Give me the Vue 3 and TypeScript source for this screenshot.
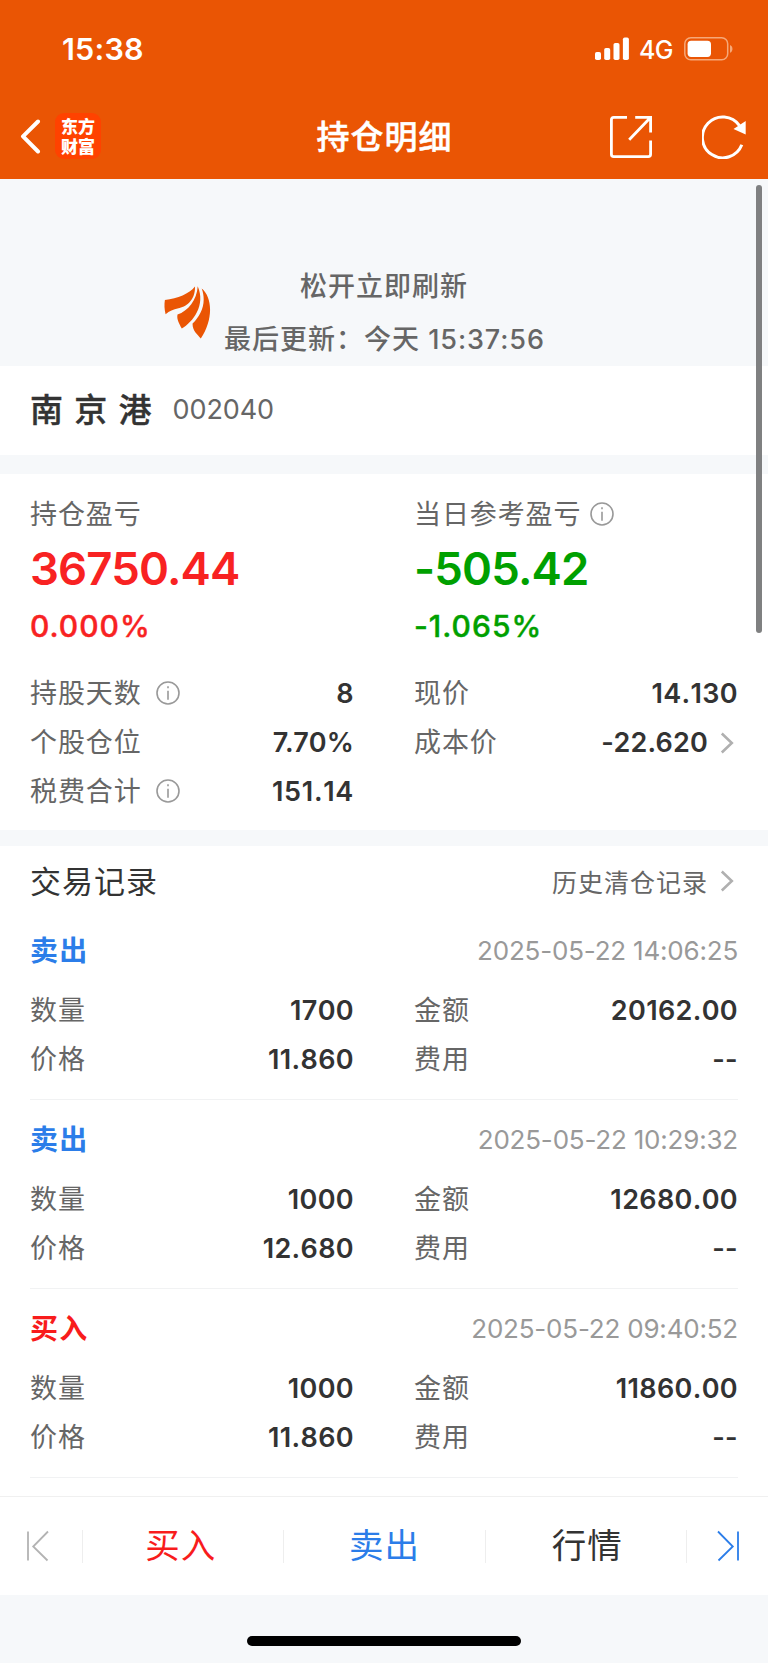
<script setup lang="ts">
interface TradeRecord {
  side: 'buy' | 'sell'
  label: string
  time: string
  quantity: string
  amount: string
  price: string
  fee: string
}

const records: TradeRecord[] = [
  { side: 'sell', label: '卖出', time: '2025-05-22 14:06:25', quantity: '1700', amount: '20162.00', price: '11.860', fee: '--' },
  { side: 'sell', label: '卖出', time: '2025-05-22 10:29:32', quantity: '1000', amount: '12680.00', price: '12.680', fee: '--' },
  { side: 'buy', label: '买入', time: '2025-05-22 09:40:52', quantity: '1000', amount: '11860.00', price: '11.860', fee: '--' },
]
</script>

<template>
  <div class="screen">
    <header class="top">
      <div class="status">
        <span class="clock">15:38</span>
        <div class="signals">
          <svg class="bars" width="35" height="24" viewBox="0 0 35 24" fill="#fff">
            <rect x="0" y="15" width="6" height="8" rx="1.8" />
            <rect x="9.2" y="11" width="6" height="12" rx="1.8" />
            <rect x="18.5" y="6" width="6" height="17" rx="1.8" />
            <rect x="27.9" y="0.5" width="6" height="22.5" rx="1.8" />
          </svg>
          <span class="network">4G</span>
          <svg class="battery" width="50" height="24" viewBox="0 0 50 24">
            <rect x="0.8" y="0.8" width="42.9" height="22" rx="6" fill="none" stroke="#f6a878" stroke-width="1.5" />
            <rect x="3.6" y="3.7" width="23.4" height="16.2" rx="3.6" fill="#fff" />
            <path d="M46 8c3.3 1.2 3.3 6.6 0 7.8z" fill="#f6a878" />
          </svg>
        </div>
      </div>
      <div class="nav">
        <svg class="back" width="22" height="36" viewBox="0 0 22 36" fill="none" stroke="#fff" stroke-width="4" stroke-linecap="round" stroke-linejoin="round">
          <path d="M18 2.5 3 17.3 18 32.5" />
        </svg>
        <div class="brand"><span class="brand-name">东方财富</span></div>
        <h1 class="title">持仓明细</h1>
        <svg class="share" width="44" height="44" viewBox="0 0 44 44" fill="none" stroke="#fff" stroke-width="2.8">
          <path d="M18 2.4H4.8Q2.4 2.4 2.4 4.8v34.4q0 2.4 2.4 2.4h34.4q2.4 0 2.4-2.4V25.5" />
          <path d="M26.2 2.4h15.4V17.6M41 3 20.2 24.8" />
        </svg>
        <svg class="reload" width="46" height="44" viewBox="0 0 46 44">
          <path d="M39.8 29.8A20.4 20.4 0 1 1 37.5 10.7" fill="none" stroke="#fff" stroke-width="3" />
          <path d="M43.7 6v13.4L31.5 14z" fill="#fff" />
        </svg>
      </div>
    </header>

    <section class="refresh">
      <svg class="logo" width="47" height="53" viewBox="0 0 47 53" fill="#ea5504">
        <path d="M.9 14C14 12 25 8 31 .4 31.5 15 21 21 14.5 22.2 9 23.2 5.5 25 1.6 28.2.3 23 .2 18 .9 14z" />
        <path d="M33.7.2C42 19 29 36 17.8 42.5 15 37.5 12.5 33 13.5 28.5 24 25 33 14 33.7.2z" />
        <path d="M37.7 2.6C49 12 49 34 36.8 52.6 33 48 28.2 44.5 28.6 37.5 37 29 43 17 37.7 2.6z" />
      </svg>
      <div class="refresh-text">
        <p class="release">松开立即刷新</p>
        <p class="updated">最后更新：<span class="today">今天 <span class="num">15:37:56</span></span></p>
      </div>
    </section>

    <section class="stock">
      <span class="stock-name">南京港</span>
      <span class="stock-code">002040</span>
    </section>

    <section class="summary">
      <div class="columns">
        <div class="profit up">
          <div class="label">持仓盈亏</div>
          <div class="big">36750.44</div>
          <div class="percent">0.000%</div>
        </div>
        <div class="profit down">
          <div class="label">当日参考盈亏
            <svg class="info near" viewBox="0 0 24 24"><circle cx="12" cy="12" r="11" /><path d="M12 9.7v9.1M12 5.2v2" /></svg>
          </div>
          <div class="big">-505.42</div>
          <div class="percent">-1.065%</div>
        </div>
      </div>
      <div class="columns facts">
        <div class="row">
          <span class="label">持股天数<svg class="info" viewBox="0 0 24 24"><circle cx="12" cy="12" r="11" /><path d="M12 9.7v9.1M12 5.2v2" /></svg></span>
          <b>8</b>
        </div>
        <div class="row"><span class="label">现价</span><b>14.130</b></div>
        <div class="row"><span class="label">个股仓位</span><b class="kerned">7.70%</b></div>
        <div class="row">
          <span class="label">成本价</span>
          <span class="linked"><b class="kerned">-22.620</b><svg class="chevron" viewBox="0 0 14 22"><path d="M1.8 1.5 11.8 11 1.8 20.5" /></svg></span>
        </div>
        <div class="row">
          <span class="label">税费合计<svg class="info" viewBox="0 0 24 24"><circle cx="12" cy="12" r="11" /><path d="M12 9.7v9.1M12 5.2v2" /></svg></span>
          <b class="wide">151.14</b>
        </div>
      </div>
    </section>

    <section class="trades">
      <div class="trades-head">
        <h2>交易记录</h2>
        <span class="history">历史清仓记录<svg class="chevron" viewBox="0 0 14 22"><path d="M1.8 1.5 11.8 11 1.8 20.5" /></svg></span>
      </div>
      <article v-for="record in records" :key="record.time" class="record">
        <div class="record-head">
          <span class="side" :class="record.side">{{ record.label }}</span>
          <time>{{ record.time }}</time>
        </div>
        <div class="columns">
          <div class="row"><span class="label">数量</span><b>{{ record.quantity }}</b></div>
          <div class="row"><span class="label">金额</span><b>{{ record.amount }}</b></div>
          <div class="row"><span class="label">价格</span><b>{{ record.price }}</b></div>
          <div class="row"><span class="label">费用</span><b>{{ record.fee }}</b></div>
        </div>
      </article>
    </section>

    <footer class="actions">
      <div class="edge">
        <svg width="24" height="32" viewBox="0 0 24 32" fill="none" stroke="#b3b3b3" stroke-width="1.8"><path d="M2 1.5v29M22 1.5 7.2 16.5 21.5 30.5" /></svg>
      </div>
      <div class="action buy">买入</div>
      <div class="action sell">卖出</div>
      <div class="action quote">行情</div>
      <div class="edge last">
        <svg width="24" height="32" viewBox="0 0 24 32" fill="none" stroke="#2b7de9" stroke-width="1.8"><path d="M22 1.5v29M2 1.5 16.8 16.5 2.5 30.5" /></svg>
      </div>
    </footer>
    <div class="home"><div class="home-bar"></div></div>
    <div class="scrollbar"></div>
  </div>
</template>

<style>
body {
  margin: 0;
  background: #f6f8fa;
}
</style>

<style scoped>
.screen {
  position: relative;
  width: 768px;
  height: 1663px;
  overflow: hidden;
  display: flex;
  flex-direction: column;
  background: #f6f8fa;
  color: #333;
  font-family: Inter, "Noto Sans CJK SC", sans-serif;
  white-space: nowrap;
}
.top {
  height: 179px;
  flex: none;
  background: #ea5504;
  color: #fff;
}
.status {
  height: 98px;
  display: flex;
  justify-content: space-between;
  padding: 0 34px 0 62px;
  align-items: center;
}
.clock {
  font-size: 30.5px;
  font-weight: 600;
  letter-spacing: 0.2px;
  padding-bottom: 2px;
}
.signals {
  display: flex;
  align-items: center;
}
.network {
  font-size: 25px;
  font-weight: 500;
  letter-spacing: -0.5px;
  margin: 2px 11px 0 9px;
}
.nav {
  height: 81px;
  display: flex;
  align-items: center;
  padding: 0 20px 4px 20px;
  box-sizing: border-box;
}
.back {
  flex: none;
}
.brand {
  width: 46px;
  height: 46px;
  flex: none;
  margin: 0 0 1px 13px;
  border-radius: 9px;
  background: #ff4200;
  display: flex;
  align-items: center;
  justify-content: center;
}
.brand-name {
  width: 36px;
  text-align: center;
  white-space: normal;
  font: 900 17px/20px "Noto Sans CJK SC", sans-serif;
}
.title {
  flex: 1;
  margin: 0 -5px 3px 0;
  padding-left: 54px;
  text-align: center;
  font-size: 33px;
  font-weight: 500;
  letter-spacing: 1px;
  -webkit-text-stroke: 0.5px currentColor;
}
.share {
  flex: none;
  margin-right: 49px;
}
.reload {
  flex: none;
}
.refresh {
  height: 187px;
  flex: none;
  display: flex;
  align-items: flex-start;
  padding-left: 164px;
  box-sizing: border-box;
  color: #666;
  font-size: 27px;
  font-weight: 500;
}
.logo {
  margin-top: 107px;
  flex: none;
}
.refresh-text {
  width: 320px;
  margin: 81px 0 0 13px;
}
.release,
.updated {
  margin: 0;
  line-height: 53px;
  letter-spacing: 1px;
}
.release {
  text-align: center;
}
.num {
  letter-spacing: 0.9px;
}
.stock {
  height: 89px;
  flex: none;
  box-sizing: border-box;
  padding: 0 30px 2px;
  background: #fff;
  display: flex;
  align-items: center;
}
.stock-name {
  margin: 0 0 4px 0;
  font-size: 33px;
  font-weight: 500;
  letter-spacing: 11.2px;
  -webkit-text-stroke: 0.4px currentColor;
}
.stock-code {
  margin-left: 10px;
  font-size: 27px;
  letter-spacing: -0.1px;
  color: #666;
}
.summary {
  height: 356px;
  flex: none;
  margin-top: 19px;
  padding: 16px 30px 0;
  box-sizing: border-box;
  background: #fff;
}
.columns {
  display: grid;
  grid-template-columns: 324px 324px;
  column-gap: 60px;
}
.label {
  font-size: 27px;
  line-height: 49px;
  letter-spacing: 0.9px;
  color: #666;
  display: flex;
  align-items: center;
}
.big {
  font-size: 45.5px;
  font-weight: 600;
  line-height: 60px;
  letter-spacing: -0.85px;
}
.percent {
  font-size: 30px;
  font-weight: 500;
  line-height: 54px;
  letter-spacing: 1px;
  -webkit-text-stroke: 0.4px currentColor;
}
.up {
  color: #f82222;
}
.down {
  color: #00a000;
}
.info {
  width: 24px;
  height: 24px;
  margin: 0 0 1px 14px;
  fill: none;
  stroke: #999;
  stroke-width: 1.6;
}
.info.near {
  margin-left: 9px;
}
.facts {
  margin-top: 16px;
}
.row {
  height: 49px;
  display: flex;
  align-items: center;
  justify-content: space-between;
}
.row b {
  font-size: 27px;
  font-weight: 600;
  font-kerning: none;
  letter-spacing: 0.35px;
}
.row b.kerned {
  font-kerning: normal;
  letter-spacing: 0.2px;
}
.row b.wide {
  letter-spacing: 0.7px;
}
.linked {
  display: flex;
  align-items: center;
}
.chevron {
  width: 14px;
  height: 22px;
  margin: 0 4px 0 12px;
  fill: none;
  stroke: #b0b0b0;
  stroke-width: 2.6;
}
.trades {
  flex: none;
  height: 650px;
  margin-top: 16px;
  padding: 0 30px;
  box-sizing: border-box;
  background: #fff;
}
.trades-head {
  height: 65px;
  padding-top: 7px;
  box-sizing: border-box;
  display: flex;
  align-items: center;
  justify-content: space-between;
}
.trades-head h2 {
  margin: 0;
  font-size: 31px;
  line-height: 44px;
  font-weight: 400;
  letter-spacing: 1px;
}
.history {
  display: flex;
  align-items: center;
  font-size: 25px;
  letter-spacing: 1px;
  color: #666;
  padding-bottom: 2px;
}
.record {
  height: 189px;
  padding-top: 5px;
  box-sizing: border-box;
  border-bottom: 1px solid #f1f2f3;
}
.record-head {
  height: 70px;
  padding-bottom: 1px;
  box-sizing: border-box;
  display: flex;
  align-items: center;
  justify-content: space-between;
}
.side {
  font-size: 28px;
  font-weight: 700;
  letter-spacing: 1.2px;
  padding-bottom: 3px;
}
.buy {
  color: #f81c1c;
}
.sell {
  color: #2b7de9;
}
.record time {
  font-size: 26px;
  letter-spacing: -0.2px;
  color: #999;
}
.actions {
  height: 99px;
  flex: none;
  box-sizing: border-box;
  border-top: 1px solid #f0f0f0;
  background: #fff;
  display: flex;
  align-items: center;
}
.edge {
  width: 83px;
  height: 33px;
  display: flex;
  align-items: center;
  justify-content: center;
  padding-right: 6px;
  box-sizing: border-box;
  border-right: 1px solid #eee;
}
.edge.last {
  width: 81px;
  padding: 0 0 0 2px;
  border: 0;
}
.action {
  flex: 1;
  height: 33px;
  line-height: 32px;
  text-align: center;
  font-size: 34.5px;
  letter-spacing: 1px;
  border-right: 1px solid #eee;
}
.action.buy {
  text-indent: -5px;
}
.action.quote {
  text-indent: 3px;
}
.home {
  flex: 1;
  display: flex;
  justify-content: center;
  align-items: flex-start;
}
.home-bar {
  width: 274px;
  height: 10px;
  margin-top: 41px;
  border-radius: 5px;
  background: #000;
}
.scrollbar {
  position: absolute;
  left: 756px;
  top: 185px;
  width: 6px;
  height: 448px;
  border-radius: 3px;
  background: #7f8081;
}
</style>
